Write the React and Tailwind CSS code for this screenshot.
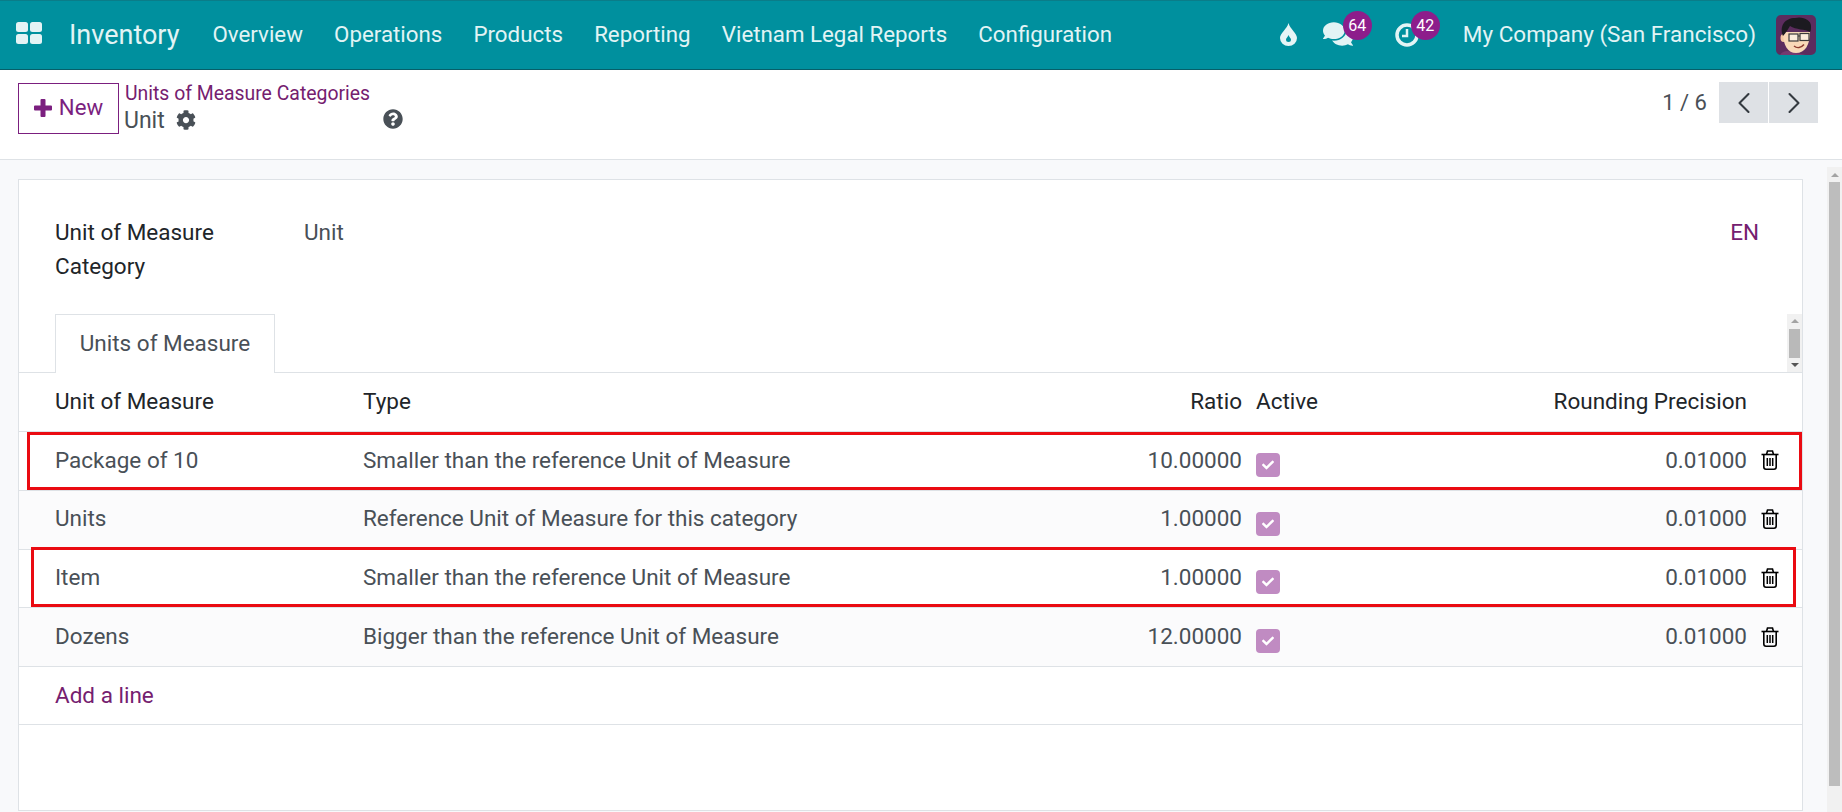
import React from 'react';
import { FaComments, FaCog, FaQuestionCircle, FaCheck } from 'react-icons/fa';
import { FiChevronLeft, FiChevronRight } from 'react-icons/fi';

const menuItems = ['Overview', 'Operations', 'Products', 'Reporting', 'Vietnam Legal Reports', 'Configuration'];

const rows = [
  { name: 'Package of 10', type: 'Smaller than the reference Unit of Measure', ratio: '10.00000', bg: 'bg-white' },
  { name: 'Units', type: 'Reference Unit of Measure for this category', ratio: '1.00000', bg: 'bg-[#fbfbfc]' },
  { name: 'Item', type: 'Smaller than the reference Unit of Measure', ratio: '1.00000', bg: 'bg-white' },
  { name: 'Dozens', type: 'Bigger than the reference Unit of Measure', ratio: '12.00000', bg: 'bg-[#fbfbfc]' },
];

const gridCols = 'grid grid-cols-[308px_578px_301px_207px_298px_1fr] items-center';

const Avatar = () => (
  <svg viewBox="0 0 40 40" className="w-10 h-10">
    <rect width="40" height="40" rx="5" fill="#5c2c5e" />
    <path d="M4 40 C8 34 14 36 20 38 L30 40 Z" fill="#743a70" />
    <ellipse cx="7.5" cy="23" rx="3" ry="4" fill="#f3c7a2" />
    <path d="M7 17 C7 31 12 38 20 38 C29 38 34 30 34 17 Z" fill="#f8d9b8" />
    <path d="M7 21 C3 11 9 3 19 3 C27 1 35 5 35 11 C35 14 35 16 34 17 C29 14 20 15 14 11 C12 14 10 18 7 21 Z" fill="#1c1a20" />
    <rect x="13" y="19" width="9" height="7" fill="#fff" fillOpacity="0.5" stroke="#3a3a3a" strokeWidth="1.2" />
    <rect x="24" y="18.5" width="9" height="7" fill="#fff" fillOpacity="0.5" stroke="#3a3a3a" strokeWidth="1.2" />
    <path d="M22 21 H24" stroke="#3a3a3a" strokeWidth="1.2" />
    <path d="M18 31 C21 33.5 25 33 28 29.5" stroke="#8c3b2e" strokeWidth="1.5" fill="none" />
  </svg>
);

const Drop = () => (
  <svg viewBox="0 0 17 23" className="w-[17px] h-[23px]" fill="#e6f5f6">
    <path
      fillRule="evenodd"
      d="M8.5 0 C10 6 17 10 17 15 A8.5 8 0 0 1 0 15 C0 10 7 6 8.5 0 Z M8.5 12 C8 14 6 15 6 16.5 A2.5 2.5 0 0 0 11 16.5 C11 15 9 14 8.5 12 Z"
    />
  </svg>
);

const Trash = () => (
  <svg viewBox="0 0 18 20" className="w-[18px] h-5" fill="none" stroke="#000" strokeWidth="1.6">
    <path d="M0.5 4.5 H17.5" />
    <path d="M5.5 4.5 L6.5 1 H11.5 L12.5 4.5" />
    <path d="M2.8 4.5 V17 Q2.8 19.2 5 19.2 H13 Q15.2 19.2 15.2 17 V4.5" />
    <path d="M6.3 8 V16 M9 8 V16 M11.7 8 V16" strokeWidth="1.5" />
  </svg>
);

const Badge = ({ children, className }) => (
  <span className={`absolute w-[29px] h-[29px] rounded-full bg-[#8d1d8b] text-white text-[16px] flex items-center justify-center ${className}`}>
    {children}
  </span>
);

export default function App() {
  return (
    <div className="h-[812px] w-[1842px] overflow-hidden flex flex-col bg-white text-[22.5px] text-[#495057] font-['Roboto',sans-serif]">
      <nav className="h-[70px] shrink-0 bg-[#00909e] border-y border-t-[#0a7d89] border-b-[#065f69] flex items-center text-[#e2f4f5]">
        <svg viewBox="0 0 26 22" className="w-[26px] h-[22px] ml-4 mb-[4px]" fill="#e4f3f5">
          <rect x="0" y="0" width="12" height="10" rx="2.5" />
          <rect x="14" y="0" width="12" height="10" rx="2.5" />
          <rect x="0" y="12" width="12" height="10" rx="2.5" />
          <rect x="14" y="12" width="12" height="10" rx="2.5" />
        </svg>
        <span className="ml-[27px] text-[27px] leading-none">Inventory</span>
        <div className="ml-[33px] flex gap-[31.2px] text-[22.3px]">
          {menuItems.map((item) => (
            <span key={item}>{item}</span>
          ))}
        </div>
        <div className="ml-auto flex items-center">
          <span className="mr-[26px] mb-[2px]">
            <Drop />
          </span>
          <span className="relative mr-[42px] mb-[2px]">
            <FaComments className="text-[30px]" />
            <Badge className="-top-[8px] left-[20px]">64</Badge>
          </span>
          <span className="relative mr-[44px]">
            <svg viewBox="0 0 24 24" className="w-6 h-6" fill="none" stroke="#e2f4f5" strokeWidth="3.5">
              <circle cx="12" cy="12" r="10" />
              <path d="M12 6 V13 H7" strokeWidth="2.5" />
            </svg>
            <Badge className="-top-[12px] left-[16px]">42</Badge>
          </span>
          <span>My Company (San Francisco)</span>
          <span className="ml-[20px] mr-[26px]">
            <Avatar />
          </span>
        </div>
      </nav>

      <header className="h-[90px] shrink-0 border-b border-[#dee2e6] flex pl-[18px] pr-[24px]">
        <button className="mt-[13px] h-[51px] w-[101px] pb-px border border-[#7b1f7f] text-[#7b1f7f] flex items-center justify-center gap-[7px] text-[22.2px]">
          <svg viewBox="0 0 18 18" className="w-[18px] h-[18px]" fill="#7b1f7f">
            <path d="M6.5 1 Q6.5 0 7.5 0 H10.5 Q11.5 0 11.5 1 V6.5 H17 Q18 6.5 18 7.5 V10.5 Q18 11.5 17 11.5 H11.5 V17 Q11.5 18 10.5 18 H7.5 Q6.5 18 6.5 17 V11.5 H1 Q0 11.5 0 10.5 V7.5 Q0 6.5 1 6.5 H6.5 Z" />
          </svg>
          New
        </button>
        <div className="ml-[6px] mt-[10px]">
          <div className="text-[#75206f] text-[19.4px] leading-[27px]">Units of Measure Categories</div>
          <div className="-ml-px flex items-center h-[29px] text-[23px]">
            Unit
            <FaCog className="ml-[11px] -mt-[3px] text-[20px]" />
            <FaQuestionCircle className="ml-[187px] -mt-[6px] text-[20px]" />
          </div>
        </div>
        <div className="ml-auto mt-[12px] flex h-[41px] items-center">
          <span className="mr-[12px] text-[22px]">1 / 6</span>
          <span className="w-[49px] h-[41px] bg-[#dee1e5] flex items-center justify-center text-[#343a40] text-[36px]">
            <FiChevronLeft strokeWidth={1.4} />
          </span>
          <span className="ml-px w-[49px] h-[41px] bg-[#dee1e5] flex items-center justify-center text-[#343a40] text-[36px]">
            <FiChevronRight strokeWidth={1.4} />
          </span>
        </div>
      </header>

      <main className="flex-1 min-h-0 flex bg-[#f8f9fb]">
        <div className="w-[1827px] pl-[18px] pt-[19px]">
          <section className="relative w-[1785px] h-[632px] bg-white border border-[#dee2e6]">
            <div className="flex justify-between pl-[36px] pr-[43px] pt-[35px] h-[134px]">
              <div className="flex">
                <div className="w-[249px] text-[#212529] leading-[34px]">
                  Unit of Measure
                  <br />
                  Category
                </div>
                <div className="leading-[34px]">Unit</div>
              </div>
              <span className="text-[#75206f] leading-[34px]">EN</span>
            </div>

            <div className="relative h-[59px] border-b border-[#dee2e6] pl-[36px]">
              <div className="w-[220px] h-[59px] bg-white border border-b-0 border-[#dee2e6] flex items-center justify-center">
                Units of Measure
              </div>
              <div className="absolute right-0 top-0 w-[15px] h-[58px] bg-[#f1f1f1] flex flex-col items-center justify-between py-[5px]">
                <span className="w-0 h-0 border-x-[4px] border-x-transparent border-b-[4px] border-b-[#a3a3a3]" />
                <span className="absolute top-[15px] left-[2px] w-[11px] h-[29px] bg-[#b9b9b9]" />
                <span className="w-0 h-0 border-x-[4px] border-x-transparent border-t-[4px] border-t-[#555]" />
              </div>
            </div>

            <div className={`${gridCols} h-[59px] pl-[36px] border-b border-[#dee2e6] text-[#212529]`}>
              <span>Unit of Measure</span>
              <span>Type</span>
              <span className="text-right">Ratio</span>
              <span className="pl-[14px]">Active</span>
              <span className="text-right">Rounding Precision</span>
            </div>

            {rows.map((row) => (
              <div key={row.name} className={`${gridCols} h-[58.75px] pl-[36px] pb-px border-b border-[#dee2e6] ${row.bg}`}>
                <span>{row.name}</span>
                <span>{row.type}</span>
                <span className="text-right">{row.ratio}</span>
                <span className="pl-[14px]">
                  <span className="mt-[9px] w-[24px] h-[24px] rounded-[4px] bg-[#c08bc2] flex items-center justify-center text-white text-[12px]">
                    <FaCheck />
                  </span>
                </span>
                <span className="text-right">0.01000</span>
                <span className="pl-[14px] flex">
                  <Trash />
                </span>
              </div>
            ))}

            <div className="h-[58px] flex items-center pl-[36px] border-b border-[#dee2e6] text-[#75206f]">Add a line</div>

            {/* red annotation boxes drawn over the table */}
            <div className="absolute left-[8px] top-[252px] w-[1775px] h-[58px] border-[3px] border-[#ea0b12] pointer-events-none" />
            <div className="absolute left-[12px] top-[367px] w-[1765px] h-[60px] border-[3px] border-[#ea0b12] pointer-events-none" />
          </section>
        </div>

        <div className="w-[15px] mt-[7px] bg-[#f1f1f1] flex flex-col items-center pt-[6px]">
          <span className="w-0 h-0 border-x-[4px] border-x-transparent border-b-[4px] border-b-[#a3a3a3]" />
          <span className="mt-[5px] w-[11px] h-[604px] bg-[#bdbdbd]" />
        </div>
      </main>
    </div>
  );
}
